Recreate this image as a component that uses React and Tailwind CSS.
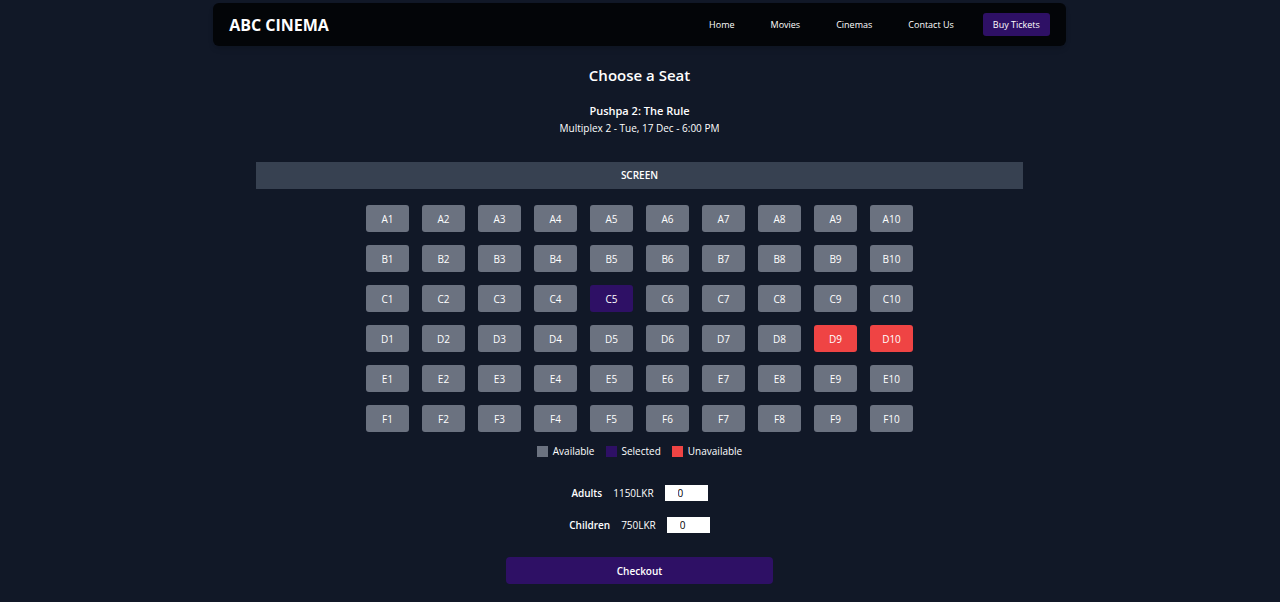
import { useState } from "react";

const ROWS = ["A", "B", "C", "D", "E", "F"];
const COLUMNS = [1, 2, 3, 4, 5, 6, 7, 8, 9, 10];
const UNAVAILABLE = ["D9", "D10"];
const LINKS = ["Home", "Movies", "Cinemas", "Contact Us"];
const LEGEND = [
  { label: "Available", color: "bg-[#6b7280]" },
  { label: "Selected", color: "bg-[#2e1065]" },
  { label: "Unavailable", color: "bg-[#ef4444]" },
];

function Header() {
  return (
    <header className="mx-auto flex w-2/3 items-center justify-between rounded-md bg-[#030508] px-4 py-[10px] shadow-md">
      <span className="text-base leading-5 font-bold">ABC CINEMA</span>
      <nav className="flex items-center text-[9px] leading-[23px] font-medium">
        <ul className="mr-[29px] flex gap-9">
          {LINKS.map((link) => (
            <li key={link}>
              <a href="#">{link}</a>
            </li>
          ))}
        </ul>
        <a href="#" className="rounded-[3px] bg-[#2e1065] px-[10px]">
          Buy Tickets
        </a>
      </nav>
    </header>
  );
}

function Seat({ id, selected, onSelect }) {
  const unavailable = UNAVAILABLE.includes(id);
  const color = unavailable ? "bg-[#ef4444]" : selected ? "bg-[#2e1065]" : "bg-[#6b7280]";
  return (
    <button
      type="button"
      disabled={unavailable}
      aria-pressed={selected}
      onClick={() => onSelect(id)}
      className={`h-[27px] w-[43px] rounded-[3px] text-center ${color}`}
    >
      {id}
    </button>
  );
}

function Quantity({ id, label, price }) {
  const [count, setCount] = useState(0);
  return (
    <div className="flex h-4 items-center gap-[11px]">
      <label htmlFor={id} className="font-semibold">
        {label}
      </label>
      <span>{price}</span>
      <input
        id={id}
        type="number"
        min="0"
        value={count}
        onChange={(event) => setCount(event.target.value)}
        className="h-4 w-[43px] bg-white pl-[13px] text-black"
      />
    </div>
  );
}

export default function App() {
  const [selected, setSelected] = useState("C5");
  return (
    <div className="min-h-screen bg-[#111827] pt-[3px] pr-px pb-[18px] font-['Open_Sans','Noto_Sans',sans-serif] text-[10px] leading-4 text-white">
      <Header />
      <main className="flex flex-col items-center">
        <h1 className="mt-[19px] text-[15px] leading-5 font-semibold">Choose a Seat</h1>
        <h2 className="mt-[17px] text-[11px] leading-[18px] font-semibold">Pushpa 2: The Rule</h2>
        <p>Multiplex 2 - Tue, 17 Dec - 6:00 PM</p>
        <div className="mt-[26px] w-3/5 bg-[#374151] text-center leading-[27px] font-semibold">SCREEN</div>
        <div className="mt-4 grid grid-cols-10 gap-[13px]">
          {ROWS.flatMap((row) =>
            COLUMNS.map((column) => {
              const id = `${row}${column}`;
              return <Seat key={id} id={id} selected={selected === id} onSelect={setSelected} />;
            })
          )}
        </div>
        <ul className="mt-[11px] flex gap-[11px]">
          {LEGEND.map(({ label, color }) => (
            <li key={label} className="flex items-center gap-[5px]">
              <span className={`size-[11px] ${color}`} />
              {label}
            </li>
          ))}
        </ul>
        <div className="mt-[26px] flex flex-col items-center gap-4">
          <Quantity id="adults" label="Adults" price="1150LKR" />
          <Quantity id="children" label="Children" price="750LKR" />
        </div>
        <button type="button" className="mt-6 h-[27px] w-[267px] rounded-[4px] bg-[#2e1065] font-semibold">
          Checkout
        </button>
      </main>
    </div>
  );
}
